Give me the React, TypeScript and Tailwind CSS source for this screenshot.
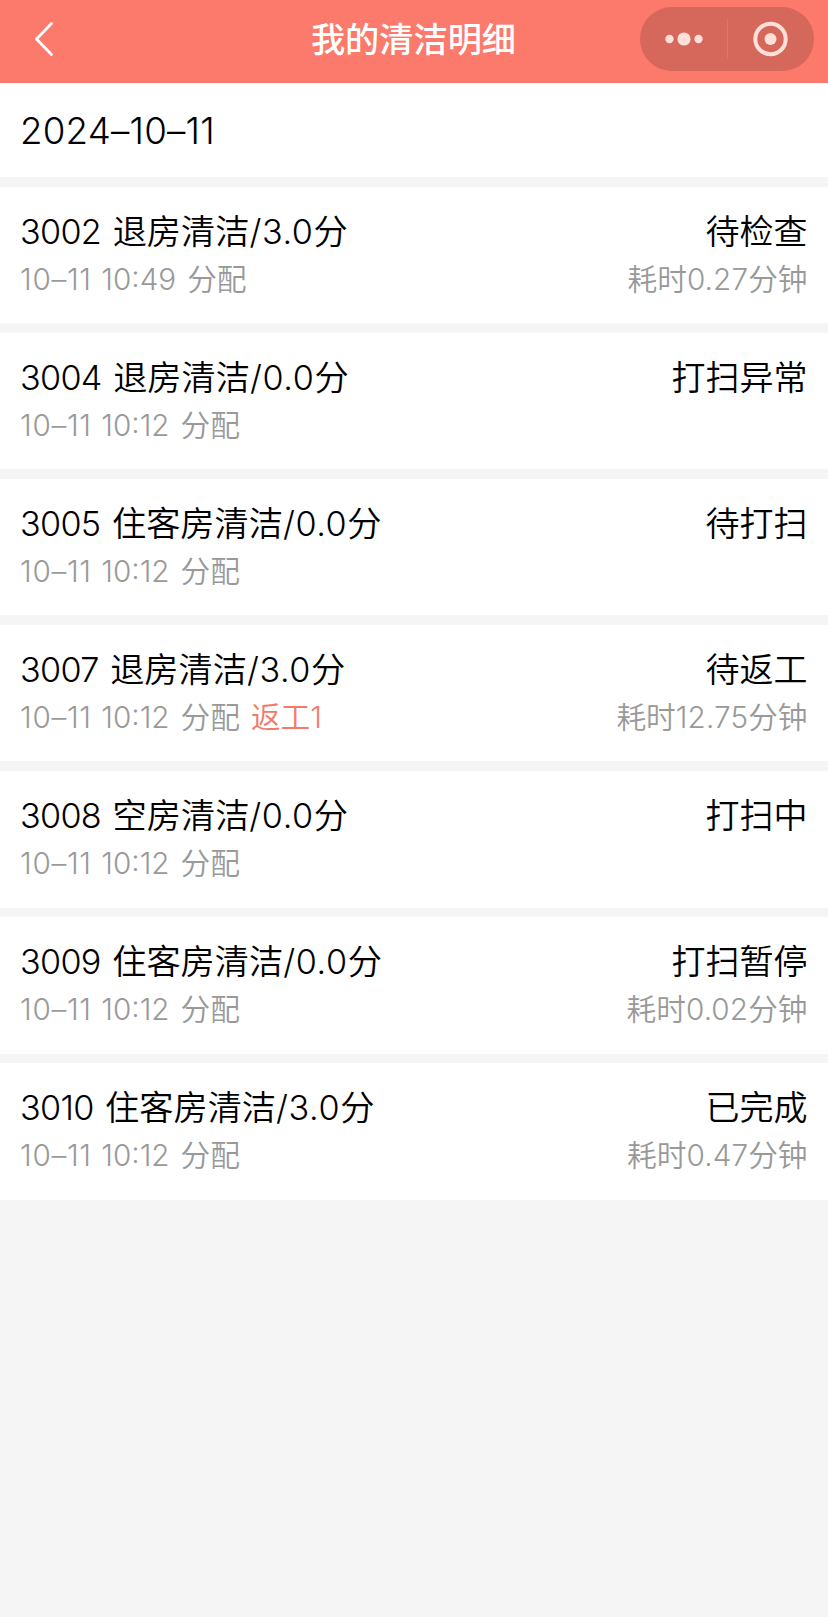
type Task = {
  room: string;
  kind: string;
  score: string;
  date: string;
  time: string;
  status: string;
  minutes?: string;
  rework?: string;
};

const tasks: Task[] = [
  { room: "3002", kind: "退房清洁", score: "/3.0", date: "10–11", time: "10:49", status: "待检查", minutes: "0.27" },
  { room: "3004", kind: "退房清洁", score: "/0.0", date: "10–11", time: "10:12", status: "打扫异常" },
  { room: "3005", kind: "住客房清洁", score: "/0.0", date: "10–11", time: "10:12", status: "待打扫" },
  { room: "3007", kind: "退房清洁", score: "/3.0", date: "10–11", time: "10:12", status: "待返工", minutes: "12.75", rework: "1" },
  { room: "3008", kind: "空房清洁", score: "/0.0", date: "10–11", time: "10:12", status: "打扫中" },
  { room: "3009", kind: "住客房清洁", score: "/0.0", date: "10–11", time: "10:12", status: "打扫暂停", minutes: "0.02" },
  { room: "3010", kind: "住客房清洁", score: "/3.0", date: "10–11", time: "10:12", status: "已完成", minutes: "0.47" },
];

function Header() {
  return (
    <header className="grid h-[83px] grid-cols-[1fr_auto_1fr] items-center bg-[#fb7a6b] pb-[5px] text-white">
      <svg className="ml-[33px] h-[36px] w-[22px]" viewBox="0 0 22 36" fill="none">
        <path d="M18.5 2.5 3.5 18l15 15.500" stroke="currentColor" strokeWidth="2.8" strokeLinecap="round" strokeLinejoin="round" />
      </svg>
      <h1 className="pt-[2px] pr-px text-[34.2px] leading-none font-medium">我的清洁明细</h1>
      <div className="mr-[14px] flex h-[64px] w-[174px] items-center justify-self-end rounded-full bg-[#d5675b] text-[#ffe0d8]">
        <svg className="h-[64px] w-[87px]" viewBox="0 0 87 64" fill="currentColor">
          <circle cx="29.500" cy="32" r="4.200" />
          <circle cx="44" cy="32" r="6.600" />
          <circle cx="58.500" cy="32" r="4.200" />
        </svg>
        <span className="h-[40px] w-px bg-[#dd7769]" />
        <svg className="h-[64px] w-[86px]" viewBox="0 0 86 64" fill="none">
          <circle cx="42.500" cy="32" r="15.200" stroke="currentColor" strokeWidth="4" />
          <circle cx="42.500" cy="32" r="6" fill="currentColor" />
        </svg>
      </div>
    </header>
  );
}

function TaskRow({ task }: { task: Task }) {
  return (
    <li className="flex h-[136.700px] justify-between bg-white pt-[21px] pr-[20.500px] pl-[20px]">
      <div>
        <p className="flex h-[48px] items-center text-[34.2px] text-black">
          <span className="tracking-[-0.700px]">{task.room}</span>
          <span className="ml-[11.500px]">{task.kind}</span>
          <span className="tracking-[0.600px]">{task.score}</span>
          <span>分</span>
        </p>
        <p className="flex h-[47px] items-center text-[29.700px] text-[#999]">
          <span className="tracking-[0.700px]">{task.date}</span>
          <span className="ml-[9.500px]">{task.time}</span>
          <span className="ml-[11px]">分配</span>
          {task.rework && (
            <span className="ml-[11px] text-[#f4796b]">返工{task.rework}</span>
          )}
        </p>
      </div>
      <div className="flex flex-col items-end">
        <p className="flex h-[48px] items-center text-[34px] text-black">{task.status}</p>
        {task.minutes && (
          <p className="flex h-[47px] items-center text-[29.700px] text-[#999]">
            <span>耗时</span>
            <span className="tracking-[0.100px]">{task.minutes}</span>
            <span>分钟</span>
          </p>
        )}
      </div>
    </li>
  );
}

export default function App() {
  return (
    <main className="min-h-screen bg-[#f5f5f5] font-['Inter','Noto_Sans_CJK_SC',sans-serif] font-[350]">
      <Header />
      <div className="flex h-[94px] items-center bg-white px-[20px] pt-px text-[36.700px] tracking-[0.200px] text-black">
        2024–10–11
      </div>
      <ul className="mt-[9.500px] flex flex-col gap-[9.400px]">
        {tasks.map((task) => (
          <TaskRow key={task.room} task={task} />
        ))}
      </ul>
    </main>
  );
}
